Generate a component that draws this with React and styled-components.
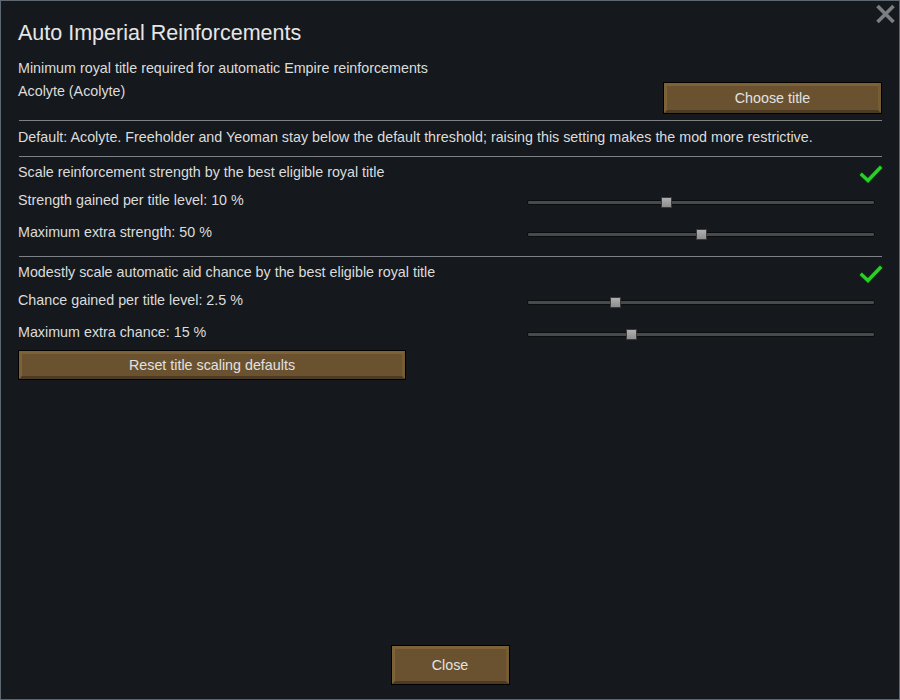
import React from "react";
import styled, { createGlobalStyle } from "styled-components";

const Global = createGlobalStyle`
  html, body { margin: 0; padding: 0; background: #15191d; }
  body { font-family: "Liberation Sans", Arial, sans-serif; }
  * { box-sizing: border-box; }
`;

const Window = styled.div`
  position: relative;
  width: 900px;
  height: 700px;
  border: 1px solid #5f6770;
  background: #15191d;
  padding: 17px 17px 14px 17px;
  display: flex;
  flex-direction: column;
  color: #dcdcdc;
  font-size: 14.3px;
`;

const CloseX = styled.button`
  position: absolute;
  top: 3px;
  right: 3px;
  width: 21px;
  height: 20px;
  padding: 0;
  border: 0;
  background: none;
  cursor: pointer;
  display: block;
`;

const Title = styled.h1`
  margin: 0;
  height: 30px;
  line-height: 30px;
  font-size: 21.5px;
  font-weight: normal;
  color: #e6e6e6;
  white-space: nowrap;
`;

const Label = styled.div`
  line-height: 22px;
  height: 22px;
  white-space: nowrap;
  margin-top: ${(p) => p.$top || 0}px;
`;

const TitleRow = styled.div`
  display: flex;
  justify-content: space-between;
  align-items: flex-start;
  margin-top: 1px;
  height: 33px;
`;

const Button = styled.button`
  font-family: "Liberation Sans", Arial, sans-serif;
  font-size: 14.3px;
  color: #e2e2e2;
  background: #6a5230;
  border-style: solid;
  border-width: 3px;
  border-color: #7c6236 #765c32 #4c3b22 #7c6236;
  box-shadow: 0 0 0 1px #000;
  margin: 1px;
  padding: 0;
  width: ${(p) => p.$w}px;
  height: ${(p) => p.$h}px;
  cursor: pointer;
  flex: none;
`;

const ChooseButton = styled(Button)`
  margin-top: 3px;
`;

const Divider = styled.hr`
  margin: ${(p) => p.$top}px 0 0 1px;
  border: 0;
  height: 1px;
  background: #7e8186;
`;

const ToggleRow = styled.div`
  display: flex;
  justify-content: space-between;
  align-items: flex-start;
  height: 28px;
  margin-top: 4px;
`;

const Check = styled.svg`
  margin-top: 3px;
  margin-right: -1px;
  width: 24px;
  height: 20px;
  display: block;
`;

const SliderRow = styled.div`
  display: grid;
  grid-template-columns: 1fr 348px;
  height: 30px;
  margin-right: 7px;
  margin-top: ${(p) => p.$top || 0}px;
`;

const Track = styled.div`
  position: relative;
  margin-top: 11px;
  height: 5px;
  border-radius: 2px;
  background: #474a4d;
  border: 1px solid #0b0c0d;
`;

const Thumb = styled.div`
  position: absolute;
  top: -4px;
  width: 11px;
  height: 11px;
  margin-left: -5px;
  background: linear-gradient(#b0b0b0, #8e8e8e);
  border: 1px solid #3a3a3a;
`;

const ResetWrap = styled.div`
  margin-top: -1px;
`;

const Footer = styled.div`
  margin-top: auto;
  display: flex;
  justify-content: center;
`;

function Slider({ value }) {
  return (
    <Track>
      <Thumb style={{ left: `${value * 100}%` }} />
    </Track>
  );
}

function CheckMark() {
  return (
    <Check viewBox="0 0 24 20">
      <polyline points="3,11 9,16.5 21,4" fill="none" stroke="#0d2a0d" strokeWidth="6" strokeLinecap="square" strokeLinejoin="miter" />
      <polyline points="3,11 9,16.5 21,4" fill="none" stroke="#27d127" strokeWidth="3.4" strokeLinecap="square" strokeLinejoin="miter" />
    </Check>
  );
}

export default function App() {
  return (
    <>
      <Global />
      <Window>
        <CloseX aria-label="Close">
          <svg width="21" height="20" viewBox="0 0 21 20">
            <path d="M2.5 2 L18.5 18 M18.5 2 L2.5 18" stroke="#7b7e82" strokeWidth="3.6" />
          </svg>
        </CloseX>
        <Title>Auto Imperial Reinforcements</Title>
        <Label $top={9}>Minimum royal title required for automatic Empire reinforcements</Label>
        <TitleRow>
          <Label>Acolyte (Acolyte)</Label>
          <ChooseButton $w={217} $h={30}>Choose title</ChooseButton>
        </TitleRow>
        <Divider $top={7} />
        <Label $top={5}>
          Default: Acolyte. Freeholder and Yeoman stay below the default threshold; raising this setting makes the mod more restrictive.
        </Label>
        <Divider $top={8} />
        <ToggleRow>
          <Label>Scale reinforcement strength by the best eligible royal title</Label>
          <CheckMark />
        </ToggleRow>
        <SliderRow>
          <Label>Strength gained per title level: 10 %</Label>
          <Slider value={0.4} />
        </SliderRow>
        <SliderRow $top={2}>
          <Label>Maximum extra strength: 50 %</Label>
          <Slider value={0.5} />
        </SliderRow>
        <Divider $top={5} />
        <ToggleRow>
          <Label>Modestly scale automatic aid chance by the best eligible royal title</Label>
          <CheckMark />
        </ToggleRow>
        <SliderRow>
          <Label>Chance gained per title level: 2.5 %</Label>
          <Slider value={0.25} />
        </SliderRow>
        <SliderRow $top={2}>
          <Label>Maximum extra chance: 15 %</Label>
          <Slider value={0.297} />
        </SliderRow>
        <ResetWrap>
          <Button $w={386} $h={28}>Reset title scaling defaults</Button>
        </ResetWrap>
        <Footer>
          <Button $w={117} $h={38}>Close</Button>
        </Footer>
      </Window>
    </>
  );
}
